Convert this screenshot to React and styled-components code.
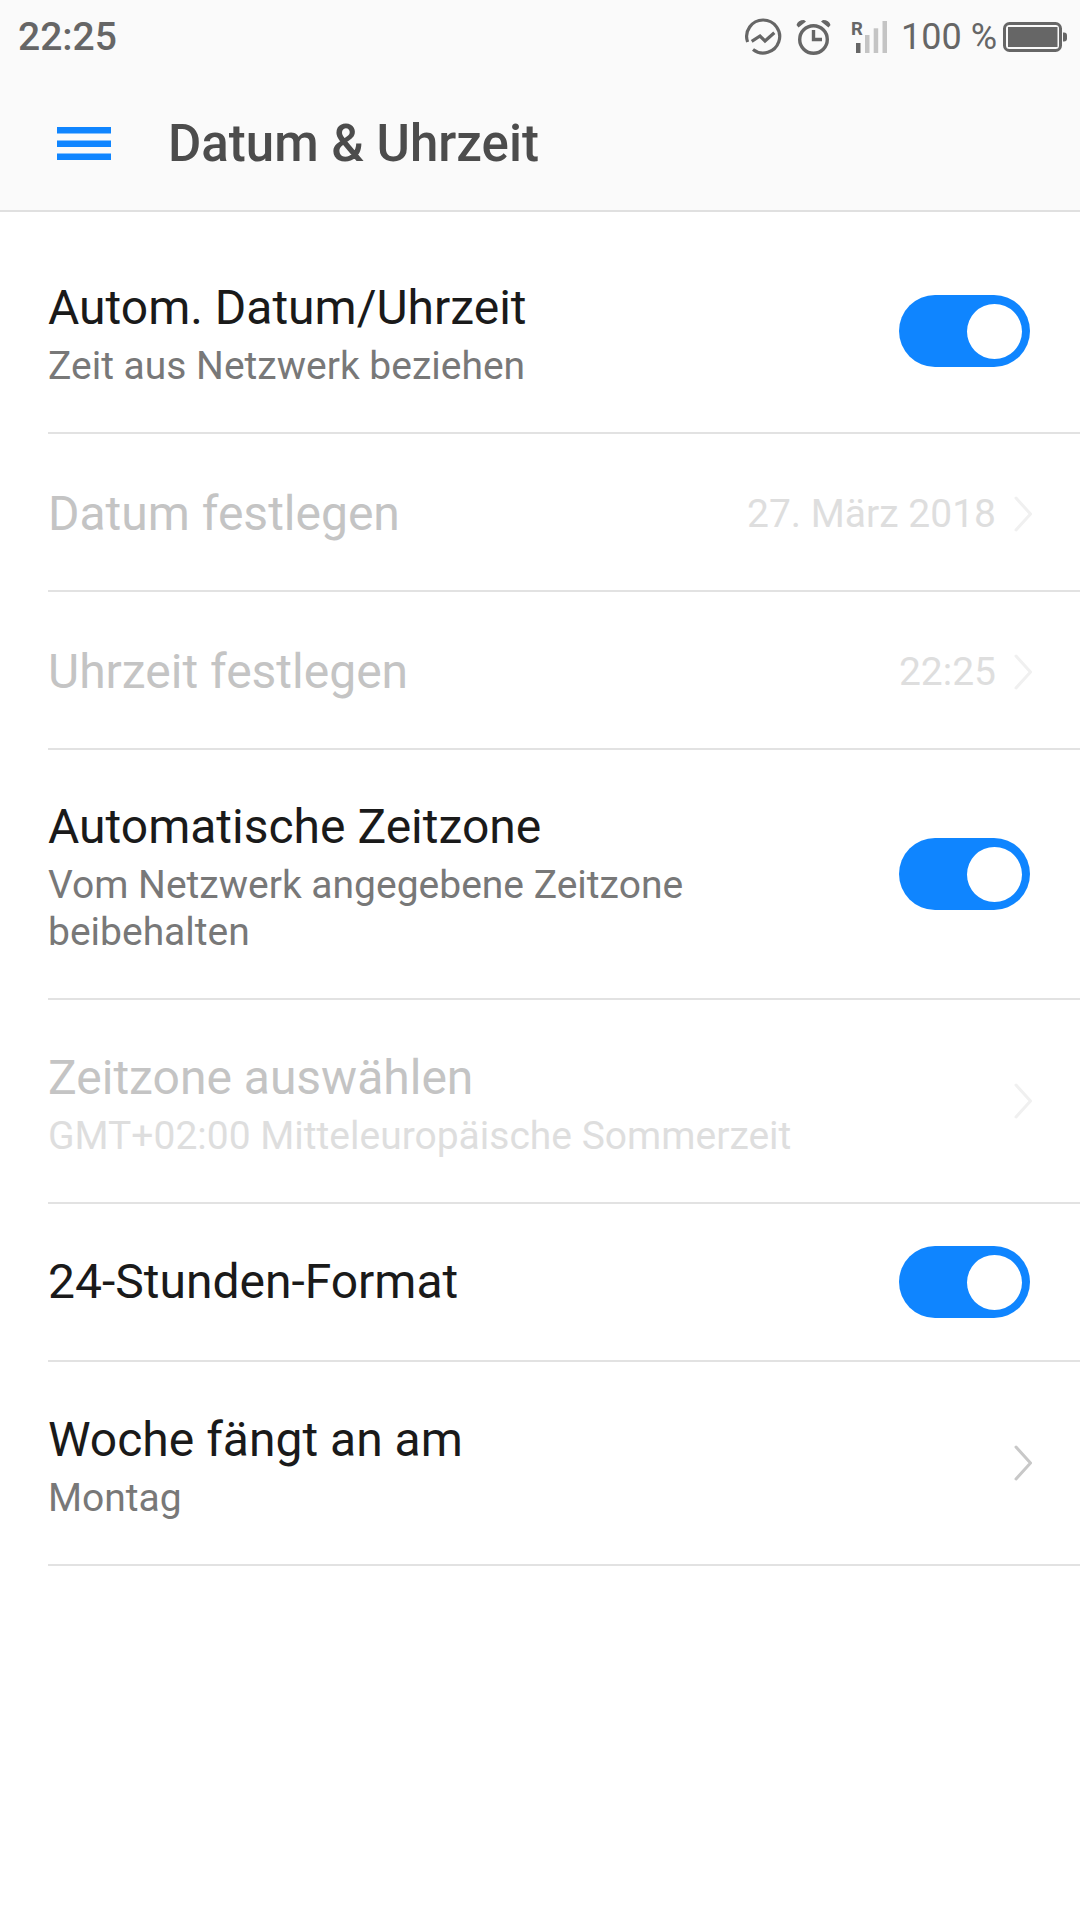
import React from 'react'
import styled, { createGlobalStyle } from 'styled-components'

const Global = createGlobalStyle`
    html, body { margin: 0; padding: 0; background: #fff; }
    body { font-family: Roboto, "Liberation Sans", sans-serif; }
`

const Page = styled.div`
    width: 1080px;
    height: 1920px;
    overflow: hidden;
    background: #fff;
`

const Top = styled.header`
    height: 210px;
    background: #fafafa;
    border-bottom: 2px solid #e0e0e0;
`

const StatusBar = styled.div`
    height: 70px;
    display: flex;
    align-items: center;
    justify-content: space-between;
    padding: 4px 13px 0 18px;
    box-sizing: border-box;
    color: #666;
`

const Clock = styled.span`
    font-size: 39px;
    font-weight: 500;
`

const StatusIcons = styled.div`
    display: flex;
    align-items: center;
`

const StatusIcon = styled.svg`
    display: block;
    overflow: visible;
    margin-left: ${p => p.$gap || 0}px;
`

const Percent = styled.span`
    font-size: 36px;
    margin-left: 14px;
`

const TitleBar = styled.div`
    height: 140px;
    display: flex;
    align-items: center;
    padding: 6px 0 0 57px;
    box-sizing: border-box;
`

const Burger = styled.svg`
    width: 54px;
    height: 33px;
    margin-right: 57px;
`

const Title = styled.h1`
    margin: 0;
    font-size: 51px;
    font-weight: 500;
    color: #4c4c4c;
`

const List = styled.div`
    padding-left: 48px;
`

const Row = styled.div`
    height: ${p => p.$h}px;
    display: flex;
    align-items: center;
    justify-content: space-between;
    box-sizing: border-box;
    border-bottom: 2px solid #e2e2e2;
    padding: ${p => p.$top || 0}px 50px 0 0;
`

const Texts = styled.div`
    width: ${p => p.$auto ? 'auto' : '720px'};
`

const Label = styled.div`
    font-size: 48px;
    line-height: 70px;
    color: ${p => p.$off ? '#c4c4c4' : '#1a1a1a'};
`

const Sub = styled.div`
    font-size: 39px;
    line-height: 47px;
    color: ${p => p.$off ? '#dedede' : '#787878'};
`

const Side = styled.div`
    display: flex;
    align-items: center;
    gap: 18px;
`

const Value = styled.span`
    font-size: 39px;
    color: #dedede;
`

const Switch = styled.div`
    width: 131px;
    height: 72px;
    border-radius: 36px;
    background: #0f85ff;
    display: flex;
    align-items: center;
    justify-content: flex-end;
    padding-right: 8px;
    box-sizing: border-box;
`

const Knob = styled.div`
    width: 55px;
    height: 55px;
    border-radius: 50%;
    background: #fff;
`

const ChevronIcon = styled.svg`
    display: block;
    margin-right: -2px;
`

const Chevron = ({ off }) => (
    <ChevronIcon width="18" height="36" viewBox="0 0 18 36">
        <path d="M2 2 L16.5 18 L2 34" fill="none" stroke={off ? '#f0f0f0' : '#c8c8c8'} strokeWidth="3" strokeLinecap="round" strokeLinejoin="round" />
    </ChevronIcon>
)

const Toggle = () => <Switch><Knob /></Switch>

const App = () => (
    <Page>
        <Global />
        <Top>
            <StatusBar>
                <Clock>22:25</Clock>
                <StatusIcons>
                    <StatusIcon width="37" height="36" viewBox="0 0 37 36" fill="none" stroke="#666" strokeWidth="3.2">
                        <path d="M2.6 23 A16.5 16.5 0 1 1 8 30.5" />
                        <path d="M6.7 22.3 L15 17 L20 22 L29.3 13.7" />
                    </StatusIcon>
                    <StatusIcon $gap={14} width="35" height="36" viewBox="0 0 35 36">
                        <g fill="none" stroke="#666" strokeWidth="3.4">
                            <circle cx="17.5" cy="20.5" r="13.8" />
                            <path d="M17.5 11 V20.5 H26" />
                        </g>
                        <path d="M0.5 6 Q2 1 8 1 L10 2.5 L2.5 8.5 Z M34.5 6 Q33 1 27 1 L25 2.5 L32.5 8.5 Z" fill="#666" />
                    </StatusIcon>
                    <StatusIcon $gap={20} width="36" height="32" viewBox="0 0 36 32">
                        <text x="0" y="13.5" fontSize="18.5" fontWeight="700" fontFamily="Roboto" fill="#666">R</text>
                        <rect x="5" y="22" width="4.5" height="10" fill="#666" />
                        <rect x="14" y="14" width="4.5" height="18" fill="#c4c4c4" />
                        <rect x="22.7" y="7.3" width="4.5" height="24.7" fill="#c4c4c4" />
                        <rect x="31.5" y="0" width="4.5" height="32" fill="#c4c4c4" />
                    </StatusIcon>
                    <Percent>100 %</Percent>
                    <StatusIcon $gap={6} width="64" height="30" viewBox="0 0 64 30">
                        <rect x="1.5" y="1.5" width="56" height="27" rx="5" fill="none" stroke="#666" strokeWidth="3" />
                        <rect x="5" y="5" width="49.5" height="20" fill="#666" />
                        <path d="M60 10.5 h1 a3 3 0 0 1 3 3 v3 a3 3 0 0 1 -3 3 h-1 z" fill="#666" />
                    </StatusIcon>
                </StatusIcons>
            </StatusBar>
            <TitleBar>
                <Burger viewBox="0 0 54 33">
                    <rect y="0" width="54" height="6.5" fill="#0f85ff" />
                    <rect y="13.5" width="54" height="6.5" fill="#0f85ff" />
                    <rect y="26.5" width="54" height="6.5" fill="#0f85ff" />
                </Burger>
                <Title>Datum &amp; Uhrzeit</Title>
            </TitleBar>
        </Top>
        <List>
            <Row $h={222} $top={18}>
                <Texts>
                    <Label>Autom. Datum/Uhrzeit</Label>
                    <Sub>Zeit aus Netzwerk beziehen</Sub>
                </Texts>
                <Toggle />
            </Row>
            <Row $h={158} $top={3}>
                <Label $off>Datum festlegen</Label>
                <Side><Value>27. März 2018</Value><Chevron off /></Side>
            </Row>
            <Row $h={158} $top={3}>
                <Label $off>Uhrzeit festlegen</Label>
                <Side><Value>22:25</Value><Chevron off /></Side>
            </Row>
            <Row $h={250}>
                <Texts>
                    <Label>Automatische Zeitzone</Label>
                    <Sub>Vom Netzwerk angegebene Zeitzone beibehalten</Sub>
                </Texts>
                <Toggle />
            </Row>
            <Row $h={204}>
                <Texts $auto>
                    <Label $off>Zeitzone auswählen</Label>
                    <Sub $off>GMT+02:00 Mitteleuropäische Sommerzeit</Sub>
                </Texts>
                <Chevron off />
            </Row>
            <Row $h={158}>
                <Label>24-Stunden-Format</Label>
                <Toggle />
            </Row>
            <Row $h={204}>
                <Texts>
                    <Label>Woche fängt an am</Label>
                    <Sub>Montag</Sub>
                </Texts>
                <Chevron />
            </Row>
        </List>
    </Page>
)

export default App
